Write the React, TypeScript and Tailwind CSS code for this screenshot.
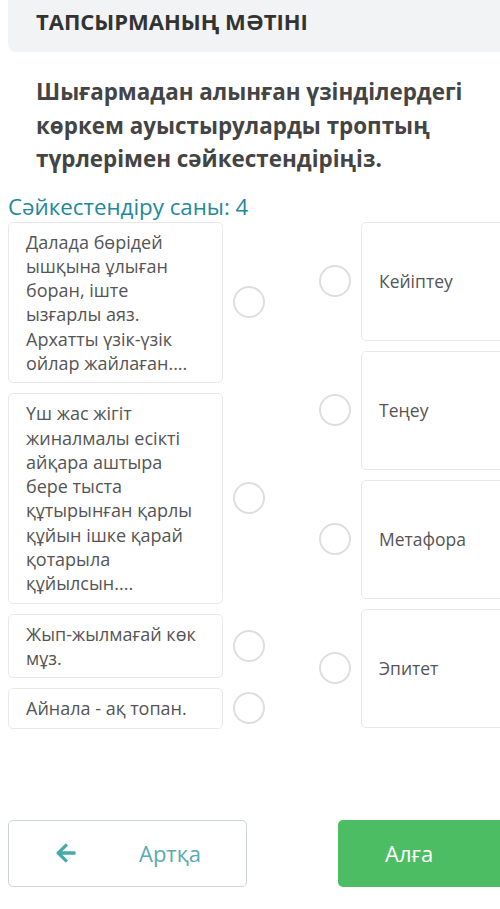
import React from 'react';
import { FaArrowLeft } from 'react-icons/fa';

// lines are kept as they wrap in the original card
const leftItems = [
  ['Далада бөрідей', 'ышқына ұлыған', 'боран, іште', 'ызғарлы аяз.', 'Архатты үзік-үзік', 'ойлар жайлаған....'],
  ['Үш жас жігіт', 'жиналмалы есікті', 'айқара аштыра', 'бере тыста', 'құтырынған қарлы', 'құйын ішке қарай', 'қотарыла', 'құйылсын....'],
  ['Жып-жылмағай көк', 'мұз.'],
  ['Айнала - ақ топан.'],
];

const rightItems = ['Кейіптеу', 'Теңеу', 'Метафора', 'Эпитет'];

const Dot = () => (
  <div className="w-[32px] h-[32px] shrink-0 rounded-full border-2 border-[#dedede] bg-white" />
);

const App: React.FC = () => {
  return (
    <div
      className="w-[500px] h-[909px] overflow-hidden bg-white text-[#555]"
      style={{ fontFamily: '"Open Sans", "Noto Sans", sans-serif' }}
    >
      {/* Header */}
      <div className="ml-[8px] h-[52px] bg-[#f1f3f4] rounded-bl-[8px] pl-[28px] flex items-center">
        <h1 className="text-[22px] font-bold text-[#333] pb-[10px]">ТАПСЫРМАНЫҢ МӘТІНІ</h1>
      </div>

      {/* Question */}
      <p className="mt-[23px] pl-[36px] pr-[4px] text-[22.4px] leading-[33.5px] font-bold text-[#444]">
        Шығармадан алынған үзінділердегі көркем ауыстыруларды троптың түрлерімен сәйкестендіріңіз.
      </p>

      <div className="mt-[17px] pl-[8px] text-[22.3px] leading-[28px] text-[#23879a]">Сәйкестендіру саны: 4</div>

      {/* Matching area */}
      <div className="mt-[1px] pl-[8px] flex">
        <div className="flex flex-col gap-[10px] w-[257px]">
          {leftItems.map((lines, i) => (
            <div key={i} className="flex items-center gap-[10px]">
              <div className="w-[215px] shrink-0 border border-[#e9e9e9] rounded-[5px] pl-[17px] pr-[8px] py-[7px] text-[18px] leading-[24.3px] text-[#555]">
                {lines.map((l) => (
                  <span key={l} className="block whitespace-nowrap">{l}</span>
                ))}
              </div>
              <Dot />
            </div>
          ))}
        </div>
        <div className="ml-[54px] flex flex-col gap-[10px]">
          {rightItems.map((t) => (
            <div key={t} className="flex items-center gap-[10px] h-[119px]">
              <Dot />
              <div className="w-[180px] h-full shrink-0 border border-[#e9e9e9] rounded-[5px] pl-[17px] flex items-center text-[17.5px] text-[#555]">
                {t}
              </div>
            </div>
          ))}
        </div>
      </div>

      {/* Buttons */}
      <div className="mt-[91px] pl-[8px] flex gap-[91px]">
        <button className="w-[239px] h-[67px] shrink-0 border border-[#cfd4d6] rounded-[5px] bg-white flex items-center text-[#5aa9b3]">
          <FaArrowLeft className="ml-[46px] text-[#46aaa8]" size={22} />
          <span className="ml-[62px] text-[22px]">Артқа</span>
        </button>
        <button className="w-[239px] h-[67px] shrink-0 rounded-[5px] bg-[#4dbd63] flex items-center text-white">
          <span className="ml-[47px] text-[22px]">Алға</span>
        </button>
      </div>
    </div>
  );
};

export default App;
